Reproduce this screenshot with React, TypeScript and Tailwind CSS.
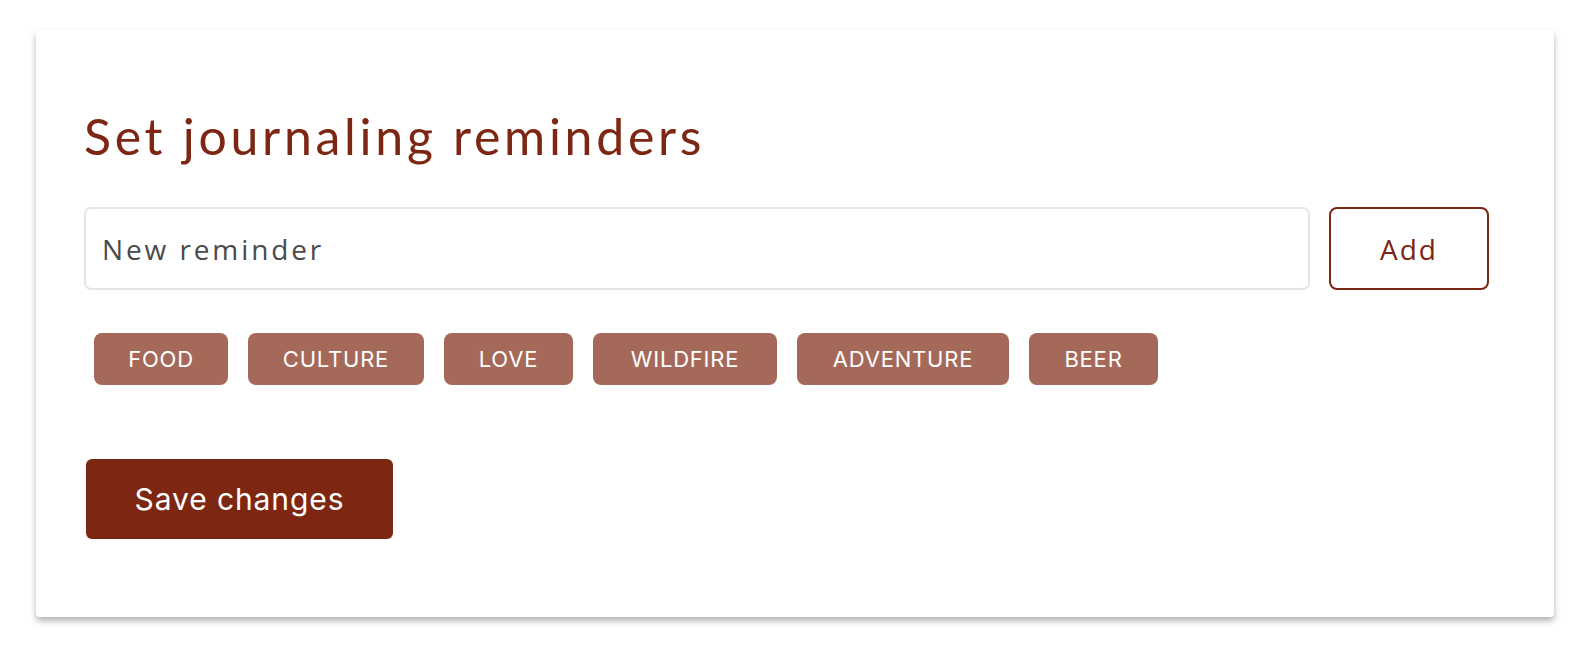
import { useState } from 'react';

const tags = [
  { label: 'Food', width: 'w-[134px]' },
  { label: 'Culture', width: 'w-[176px]' },
  { label: 'Love', width: 'w-[129px]' },
  { label: 'Wildfire', width: 'w-[184px]' },
  { label: 'Adventure', width: 'w-[212px]' },
  { label: 'Beer', width: 'w-[129px]' },
];

export default function App() {
  const [reminder, setReminder] = useState('');

  return (
    <div className="min-h-[652px] w-full bg-white pt-[30px] pl-[36px]">
      <div className="flex h-[587px] w-[1518px] flex-col rounded-[4px] bg-white px-[48px] pt-[81px] shadow-[0_4px_6px_rgba(0,0,0,0.3)]">
        <h1 className="font-['Lato',sans-serif] text-[50px] leading-[50px] font-normal tracking-[3.7px] text-[#7d2613]">
          Set journaling reminders
        </h1>

        <div className="mt-[46px] flex w-[1405px] gap-[19px]">
          <input
            value={reminder}
            onChange={(e) => setReminder(e.target.value)}
            placeholder="New reminder"
            className="h-[83px] flex-1 rounded-[7px] border-2 border-[#e8e4e4] px-[16px] font-['Open_Sans',sans-serif] text-[28px] tracking-[2.9px] text-[#4a4a4a] placeholder:text-[#4a4a4a] outline-none"
          />
          <button className="h-[83px] w-[160px] rounded-[8px] border-2 border-[#7d2613] font-['Open_Sans',sans-serif] text-[28px] tracking-[2px] text-[#7d2613]">
            Add
          </button>
        </div>

        <div className="mt-[43px] ml-[10px] flex gap-[20px]">
          {tags.map((tag) => (
            <span
              key={tag.label}
              className={`flex h-[52px] items-center justify-center rounded-[8px] bg-[#a56959] font-['Inter',sans-serif] text-[22px] tracking-[0.8px] uppercase text-white ${tag.width}`}
            >
              {tag.label}
            </span>
          ))}
        </div>

        <button className="mt-[74px] ml-[2px] h-[80px] w-[307px] rounded-[6px] bg-[#7d2611] font-['Inter',sans-serif] text-[30px] tracking-[0.9px] text-white">
          Save changes
        </button>
      </div>
    </div>
  );
}
